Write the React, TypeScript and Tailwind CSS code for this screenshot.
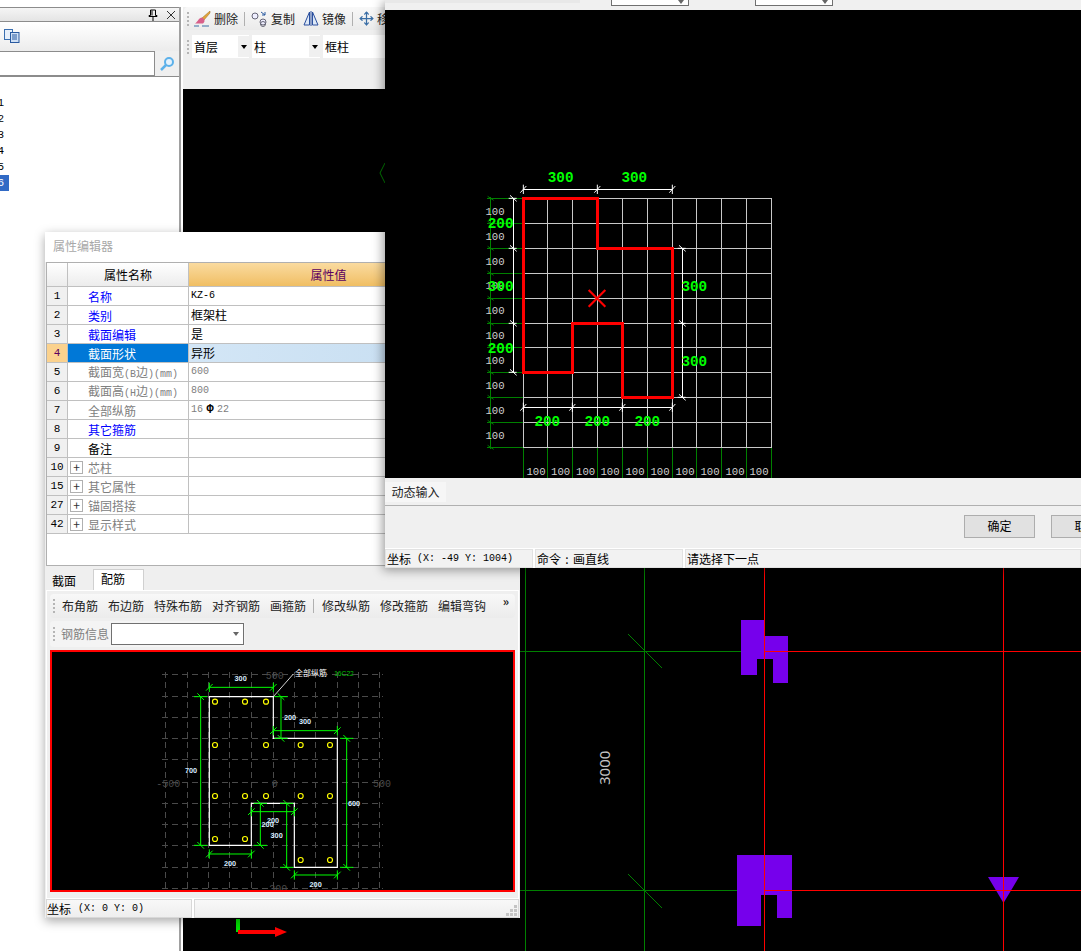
import React from "react";
import { Move } from "lucide-react";

const CJK = "font-['Noto_Sans_CJK_SC','Noto_Sans',sans-serif]";
const MONO = "font-['Liberation_Mono','Noto_Sans_CJK_SC',monospace]";

type Row = { n: string; name: string; val?: React.ReactNode; c: string; plus?: boolean; sel?: boolean; vc?: string };
const gray = `text-[#808080] text-[10px] ${MONO}`;
const rows: Row[] = [
  { n: "1", name: "名称", val: <span className={`${MONO} text-[10px]`}>KZ-6</span>, c: "text-[#0000ff]" },
  { n: "2", name: "类别", val: "框架柱", c: "text-[#0000ff]" },
  { n: "3", name: "截面编辑", val: "是", c: "text-[#0000ff]" },
  { n: "4", name: "截面形状", val: "异形", c: "text-white", sel: true },
  { n: "5", name: "截面宽(B边)(mm)", val: "600", c: "text-[#808080]", vc: gray },
  { n: "6", name: "截面高(H边)(mm)", val: "800", c: "text-[#808080]", vc: gray },
  {
    n: "7",
    name: "全部纵筋",
    val: (
      <span className="flex items-center">
        16<span className="w-[14px] text-center text-black font-bold text-[12px] leading-none">Φ</span>22
      </span>
    ),
    c: "text-[#808080]",
    vc: gray,
  },
  { n: "8", name: "其它箍筋", c: "text-[#0000ff]" },
  { n: "9", name: "备注", c: "text-black" },
  { n: "10", name: "芯柱", c: "text-[#808080]", plus: true },
  { n: "15", name: "其它属性", c: "text-[#808080]", plus: true },
  { n: "27", name: "锚固搭接", c: "text-[#808080]", plus: true },
  { n: "42", name: "显示样式", c: "text-[#808080]", plus: true },
];

function Mixed({ text }: { text: string }) {
  const parts = text.split(/([\x00-\x7f]+)/).filter(Boolean);
  return (
    <span className="whitespace-nowrap">
      {parts.map((p, i) =>
        /^[\x00-\x7f]+$/.test(p) ? (
          <span key={i} className={`${MONO} text-[10px]`}>{p}</span>
        ) : (
          <span key={i}>{p}</span>
        )
      )}
    </span>
  );
}

function Grip() {
  return (
    <div className="flex flex-col gap-[2px] w-[2px] mx-[3px] shrink-0">
      {[0, 1, 2, 3].map((i) => (
        <div key={i} className="w-[2px] h-[2px] bg-[#b5b5b5]" />
      ))}
    </div>
  );
}

function Caret({ c = "border-t-black" }: { c?: string }) {
  return <div className={`w-0 h-0 border-l-[3px] border-r-[3px] border-t-[4px] border-l-transparent border-r-transparent ${c}`} />;
}

function LeftPanel() {
  return (
    <div className="absolute left-0 top-[7px] w-[181px] bottom-0 flex flex-col bg-white border-r-2 border-[#a0a0a0]">
      <div className="h-[15px] bg-gradient-to-b from-[#f5f5f5] to-[#e4e4e4] border-y border-[#8c8c8c] flex items-center justify-end gap-[8px] pr-[3px] shrink-0">
        <svg width="10" height="12" viewBox="0 0 10 12" className="text-black">
          <path d="M2.5 1h5v5.5h1.5v1H1v-1h1.5zM4 1.5v5M5 7.5V12" fill="none" stroke="currentColor" />
        </svg>
        <svg width="10" height="10" viewBox="0 0 10 10">
          <path d="M1 1l8 8M9 1l-8 8" stroke="#333" strokeWidth="1" fill="none" />
        </svg>
      </div>
      <div className="h-[28px] mt-[1px] bg-gradient-to-b from-white to-[#ececec] flex items-center pl-[4px] pb-[2px] shrink-0">
        <svg width="16" height="14" viewBox="0 0 16 14">
          <rect x="0.5" y="0.5" width="8" height="10" fill="#e8f0fa" stroke="#3b6fb0" />
          <rect x="6.5" y="3.5" width="8.5" height="10" fill="#cfe0f5" stroke="#2a5aa0" />
          <path d="M8 6h5M8 8h5M8 10h5" stroke="#2a5aa0" />
        </svg>
      </div>
      <div className="h-[25px] flex shrink-0 bg-[#efefef]">
        <div className="flex-1 bg-white border-t border-b border-r border-[#8c8c8c]" />
        <div className="w-[24px] flex items-center justify-center">
          <svg width="15" height="15" viewBox="0 0 15 15">
            <circle cx="9" cy="6" r="4" fill="#e4f2fd" stroke="#5cb1ea" strokeWidth="2" />
            <path d="M6 9l-5 5" stroke="#5cb1ea" strokeWidth="2.5" />
          </svg>
        </div>
      </div>
      <div className="flex-1 border-t border-[#8c8c8c] pt-[18px]">
        {["1", "2", "3", "4", "5", "6"].map((n, i) => (
          <div key={n} className={`h-[16px] w-[9px] flex items-center justify-end overflow-hidden ${MONO} text-[11px] leading-none ${i === 5 ? "bg-[#316ac5] text-white" : "text-black"}`}>
            <span className="pr-[5px]">{n}</span>
          </div>
        ))}
      </div>
    </div>
  );
}

function ToolbarItem({ icon, label, extra = "" }: { icon: React.ReactNode; label: string; extra?: string }) {
  return (
    <div className={`flex items-center gap-[3px] shrink-0 whitespace-nowrap ${extra}`}>
      {icon}
      <span className="text-[12px] text-[#222]">{label}</span>
    </div>
  );
}

function Combo({ w, label, arrow }: { w: string; label: string; arrow?: boolean }) {
  return (
    <div className={`${w} h-[23px] bg-white flex items-center pl-[2px] shrink-0`}>
      <span className="flex-1 text-[12px] text-black">{label}</span>
      {arrow && (
        <div className="w-[11px] h-[21px] bg-[#f0f0f0] flex items-center justify-center">
          <Caret />
        </div>
      )}
    </div>
  );
}

function MainWindow() {
  return (
    <div className="absolute left-[183px] top-[7px] right-0 bottom-0 flex flex-col">
      <div className="h-[82px] bg-[#efefef] overflow-hidden shrink-0 flex flex-col pl-px">
        <div className="h-[23px] w-[210px] rounded-sm bg-gradient-to-b from-[#f8f8f8] to-[#ebebeb] flex items-center gap-[6px]">
          <div className="-mr-[5px] shrink-0"><Grip /></div>
          <ToolbarItem
            icon={
              <svg width="18" height="16" viewBox="0 0 18 16">
                <path d="M17 0L9 7l2 2 6-7z" fill="#e2a53b" stroke="#9a6b1c" strokeWidth="0.5" />
                <path d="M9 6.500c-3 0-4 4-7 6l8 0c1.500-1 2-3 1-4.500z" fill="#d85f8a" />
                <path d="M1 15h5M9 15h7" stroke="#3a6ea5" />
              </svg>
            }
            label="删除"
          />
          <div className="w-px h-[14px] bg-[#b0b0b0] shrink-0" />
          <ToolbarItem
            icon={
              <svg width="17" height="16" viewBox="0 0 17 16">
                <circle cx="4" cy="5" r="3" fill="#eef" stroke="#667" />
                <circle cx="12" cy="11" r="3" fill="#eef" stroke="#667" />
                <circle cx="12" cy="13" r="2.500" fill="none" stroke="#667" />
                <path d="M10 1l4 3M14 1v3h-3" stroke="#2a5aa0" fill="none" />
              </svg>
            }
            label="复制"
          />
          <ToolbarItem
            extra="ml-[2px]"
            icon={
              <svg width="16" height="15" viewBox="0 0 16 15">
                <path d="M6.500 1L1 14h5.500zM9.500 1L15 14H9.500z" fill="#dde8f6" stroke="#2a4f9e" />
                <path d="M8 0v15" stroke="#2a4f9e" />
              </svg>
            }
            label="镜像"
          />
          <div className="w-px h-[14px] bg-[#b0b0b0] shrink-0" />
          <ToolbarItem icon={<Move size={15} strokeWidth={2} color="#3a6ea5" />} label="移动" />
        </div>
        <div className="h-[25px] mt-[4px] flex items-center">
          <Grip />
          <div className="flex gap-[3px] w-[193px] overflow-hidden">
            <Combo w="w-[57px]" label="首层" arrow />
            <Combo w="w-[68px]" label="柱" arrow />
            <Combo w="w-[68px]" label="框柱" />
          </div>
        </div>
      </div>
      <div className="flex-1 bg-black overflow-hidden">
        <svg width="898" height="862" viewBox="183 89 898 862" className="block" shapeRendering="crispEdges">
          <path d="M385 163l-5 10 5 10" stroke="#008000" fill="none" shapeRendering="auto" />
          <rect x="236" y="919" width="4" height="13" fill="#00e000" />
          <rect x="238" y="930" width="40" height="4" fill="#ff0000" />
          <path d="M275 927l12 5-12 5z" fill="#ff0000" shapeRendering="auto" />
          <path d="M525.500 568V951M644.500 568V951" stroke="#008000" />
          <path d="M520 651.500H764M520 890.500H764" stroke="#008000" />
          <path d="M628 634l34 34M628 874l34 34" stroke="#008000" shapeRendering="auto" />
          <path d="M741 620H764.400V636H788V683H773V659H757V675H741Z" fill="#7600ec" />
          <path d="M737 855H792V918H777V895H761V926H737Z" fill="#7600ec" />
          <path d="M988 877H1019L1003.500 903Z" fill="#7600ec" shapeRendering="auto" />
          <path d="M764.500 568V951M1003.500 568V951" stroke="#ff0000" />
          <path d="M764 651.500H1081M764 890.500H1081" stroke="#ff0000" />
          <text x="0" y="0" transform="translate(610 785) rotate(-90)" fill="#c4c4c4" fontSize="15" fontFamily="'Noto Sans', sans-serif" shapeRendering="auto">
            3000
          </text>
        </svg>
      </div>
    </div>
  );
}

const smallCircles = [
  [195, 125], [285, 125], [348, 125], [195, 255], [348, 255], [452, 255], [540, 255], [195, 408],
  [285, 408], [348, 408], [452, 408], [540, 408], [195, 537], [285, 537], [452, 600], [540, 600],
];
const smallLabels: [string, number, number][] = [
  ["300", 272, 56], ["200", 420, 172], ["300", 465, 185], ["700", 123, 332], ["600", 612, 430],
  ["200", 369, 482], ["200", 353, 494], ["300", 380, 526], ["200", 240, 611], ["200", 497, 675],
];
const gx = [48, 112, 175, 240, 305, 370, 435, 497, 562, 625, 690];
const gy = [45, 110, 172, 235, 300, 368, 430, 493, 556, 622, 685];

function SmallCanvas() {
  const hd: [number, number, number][] = [[82, 178, 370], [212, 370, 562], [582, 178, 304], [645, 433, 562], [455, 304, 433]];
  const vd: [number, number, number][] = [[393, 110, 235], [590, 235, 622], [152, 110, 556], [331, 430, 556], [410, 430, 622]];
  return (
    <svg width="462" height="238" viewBox="52 652 462 238" className="block">
      <g transform="translate(150 660) scale(0.33333)">
        <g stroke="#4a4a4a" strokeWidth="3" strokeDasharray="20 10" fill="none" shapeRendering="crispEdges">
          {gx.map((x) => <path key={x} d={`M${x} 35V700`} />)}
          {gy.map((y) => <path key={y} d={`M35 ${y}H700`} />)}
        </g>
        <g fill="#4a4a4a" fontSize="30" fontFamily="'Liberation Mono', monospace" textAnchor="middle">
          <text x="374" y="58">500</text>
          <text x="55" y="380">-500</text>
          <text x="696" y="380">500</text>
          <text x="374" y="380">0</text>
          <text x="385" y="695">300</text>
        </g>
        <path d="M178 110H370V235H562V622H433V430H304V556H178Z" fill="none" stroke="#fff" strokeWidth="3.500" />
        <path d="M370 110L430 42" stroke="#fff" strokeWidth="2.500" fill="none" />
        <g stroke="#00ff00" strokeWidth="3" fill="none">
          {hd.map(([y, a, b]) => (
            <g key={`${y}${a}`}>
              <path d={`M${a} ${y}H${b}M${a} ${y - 14}V${y + 14}M${b} ${y - 14}V${y + 14}`} />
              <path d={`M${a - 10} ${y + 10}l20 -20M${b - 10} ${y + 10}l20 -20`} />
            </g>
          ))}
          {vd.map(([x, a, b]) => (
            <g key={`${x}${a}`}>
              <path d={`M${x} ${a}V${b}M${x - 20} ${a}H${x + 20}M${x - 20} ${b}H${x + 20}`} />
              <path d={`M${x - 10} ${a - 10}l20 20M${x - 10} ${b - 10}l20 20`} />
            </g>
          ))}
        </g>
        <g fill="none" stroke="#ffff00" strokeWidth="3.500">
          {smallCircles.map(([x, y]) => <circle key={`${x}-${y}`} cx={x} cy={y} r="7.500" />)}
        </g>
        <g fill="#d8ecff" fontSize="22" fontFamily="'Liberation Sans', sans-serif" textAnchor="middle" fontWeight="700">
          {smallLabels.map(([t, x, y]) => <text key={`${x}-${y}`} x={x} y={y + 7}>{t}</text>)}
        </g>
        <text x="483" y="47" fill="#fff" fontSize="24" textAnchor="middle" fontFamily="'Noto Sans CJK SC', sans-serif">全部纵筋</text>
        <text x="582" y="47" fill="#00c000" fontSize="20" textAnchor="middle" fontFamily="'Liberation Sans', sans-serif">16C22</text>
      </g>
    </svg>
  );
}

function PropertyWindow() {
  const tools1 = ["布角筋", "布边筋", "特殊布筋", "对齐钢筋", "画箍筋"];
  const tools2 = ["修改纵筋", "修改箍筋", "编辑弯钩"];
  return (
    <div className="absolute left-[45px] top-[232px] w-[475px] h-[686px] bg-[#efefef] flex flex-col shadow-[0_3px_10px_rgba(0,0,0,0.35)]">
      <div className="h-[30px] bg-white flex items-center pl-[8px] pb-[2px] shrink-0">
        <span className="text-[12px] text-[#a8a8a8]">属性编辑器</span>
      </div>
      <div className="h-[304px] bg-white border border-[#b0b0b0] mx-px shrink-0 flex flex-col">
        <div className="h-[24px] flex shrink-0 border-b border-[#c0c0c0]">
          <div className="w-[21px] bg-gradient-to-b from-white to-[#ececec] border-r border-[#c0c0c0]" />
          <div className="w-[121px] bg-gradient-to-b from-white to-[#ececec] border-r border-[#c0c0c0] flex items-center justify-center text-[12px] text-black">属性名称</div>
          <div className="flex-1 bg-gradient-to-b from-[#fadb9f] to-[#f0be62] flex items-center justify-center pr-[50px] text-[12px] text-[#5b0060]">属性值</div>
        </div>
        {rows.map((r) => (
          <div key={r.n} className="h-[19px] flex shrink-0 border-b border-[#c0c0c0] text-[12px] leading-[16px]">
            <div className={`w-[21px] border-r border-[#c0c0c0] flex items-center justify-center ${MONO} text-[11px] ${r.sel ? "bg-[#fbd28e] text-[#5b0060]" : "bg-[#f0f0f0] text-black"}`}>{r.n}</div>
            <div className={`w-[121px] border-r border-[#c0c0c0] flex items-center pl-[2px] pt-[2px] whitespace-nowrap ${r.c} ${r.sel ? "bg-[#0078d7]" : "bg-white"}`}>
              {r.plus ? (
                <span className="w-[13px] h-[13px] border border-[#b0b0b0] flex items-center justify-center text-[#333] text-[12px] leading-none mr-[5px] shrink-0 -mt-[2px]">+</span>
              ) : (
                <span className="w-[18px] shrink-0" />
              )}
              <Mixed text={r.name} />
            </div>
            <div className={`flex-1 pl-[2px] flex items-center ${r.sel ? "bg-gradient-to-r from-[#d3e6f6] to-[#c4dcf0]" : "bg-white"} ${r.vc ?? "text-black"}`}>{r.val}</div>
          </div>
        ))}
      </div>
      <div className="h-[3px] shrink-0" />
      <div className="h-[21px] flex items-end pl-px shrink-0">
        <div className="w-[47px] h-[20px] flex items-center pl-[6px] pt-px text-[12px] text-black">截面</div>
        <div className="w-[51px] h-[21px] bg-white border border-b-0 border-[#d0d0d0] flex items-center pl-[7px] pb-[2px] text-[12px] text-black">配筋</div>
      </div>
      <div className="flex-1 mx-px bg-[#efefef] border-t border-x border-white px-[3px] pt-[3px] flex flex-col min-h-0">
        <div className="h-[24px] rounded-sm bg-gradient-to-b from-[#f8f8f8] to-[#ececec] flex items-center text-[12px] text-[#222] shrink-0 relative">
          <Grip />
          <div className="flex items-center gap-[10px] pl-[4px]">
            {tools1.map((t) => <span key={t}>{t}</span>)}
            <div className="w-px h-[14px] bg-[#b0b0b0] -ml-[3px] -mr-[2px]" />
            {tools2.map((t) => <span key={t}>{t}</span>)}
          </div>
          <span className="absolute right-[6px] top-[0px] text-[12px] font-bold leading-[14px]">»</span>
        </div>
        <div className="h-[26px] mt-[3px] w-[195px] bg-[#f4f4f4] rounded-sm flex items-center shrink-0">
          <Grip />
          <span className="ml-[3px] text-[12px] text-[#808080] whitespace-nowrap">钢筋信息</span>
          <div className="ml-[2px] w-[133px] h-[22px] bg-white border border-[#707070] flex items-center justify-end pr-[4px] shrink-0">
            <Caret c="border-t-[#666]" />
          </div>
        </div>
        <div className="h-[242px] mt-[3px] bg-black border-2 border-[#ff0000] shrink-0">
          <SmallCanvas />
        </div>
      </div>
      <div className="h-[20px] flex gap-[2px] bg-white pt-px shrink-0 mx-px">
        <div className="w-[146px] border border-[#d8d8d8] bg-gradient-to-b from-[#f8f8f8] to-[#eeeeee] flex items-center text-[12px] text-black">
          坐标<span className={`${MONO} text-[10px] pl-[7px]`}>(X: 0 Y: 0)</span>
        </div>
        <div className="flex-1 border border-[#d8d8d8] bg-gradient-to-b from-[#f8f8f8] to-[#eeeeee] flex items-end justify-end p-px">
          <svg width="11" height="11" viewBox="0 0 11 11">
            <path d="M8 0h3v3H8zM4 4h3v3H4zM8 4h3v3H8zM0 8h3v3H0zM4 8h3v3H4zM8 8h3v3H8z" fill="#c4c4c4" />
          </svg>
        </div>
      </div>
    </div>
  );
}

const gV = [160, 232, 307, 382, 457, 532, 607, 679, 755, 830, 905];
const gH = [115, 190, 265, 340, 415, 490, 562, 637, 712, 787, 862];
const leftNums = [155, 230, 305, 377, 452, 527, 602, 677, 752, 825];
const botNums = [198, 272, 347, 420, 495, 570, 645, 720, 795, 867];
const greens: [string, number, number][] = [
  ["300", 272, 50], ["300", 493, 50], ["200", 92, 190], ["300", 92, 377], ["200", 92, 563],
  ["300", 673, 377], ["300", 673, 602], ["200", 232, 782], ["200", 382, 782], ["200", 532, 782],
];

function DialogCanvas() {
  const hTicks = [[88, [160, 382, 607]], [742, [160, 307, 457, 607]]] as [number, number[]][];
  const vTicks = [[130, [115, 265, 490, 637]], [637, [265, 490, 712]]] as [number, number[]][];
  return (
    <svg width="696" height="468" viewBox="385 10 696 468" className="block">
      <g transform="translate(470 160) scale(0.33333)">
        <g stroke="#008000" strokeWidth="3" fill="none" shapeRendering="crispEdges">
          {gH.map((y) => <path key={y} d={`M50 ${y}H160`} />)}
          <path d="M62 110V866" />
          {gV.map((x) => <path key={x} d={`M${x} 862V955`} />)}
        </g>
        <g stroke="#c8c8c8" strokeWidth="3" fill="none" shapeRendering="crispEdges">
          {gV.map((x) => <path key={x} d={`M${x} 115V862`} />)}
          {gH.map((y) => <path key={y} d={`M160 ${y}H905`} />)}
        </g>
        <g stroke="#008000" strokeWidth="3" fill="none">
          {gH.map((y) => <path key={y} d={`M53 ${y - 6}l18 12`} />)}
        </g>
        <g stroke="#fff" strokeWidth="3" fill="none">
          {hTicks.map(([y, xs]) => (
            <g key={y}>
              <path d={`M${xs[0]} ${y}H${xs[xs.length - 1]}`} shapeRendering="crispEdges" />
              {xs.map((x) => <path key={x} d={`M${x - 9} ${y + 10}l18 -20M${x} ${y - 14}V${y + 14}`} />)}
            </g>
          ))}
          {vTicks.map(([x, ys]) => (
            <g key={x}>
              <path d={`M${x} ${ys[0]}V${ys[ys.length - 1]}`} shapeRendering="crispEdges" />
              {ys.map((y) => <path key={y} d={`M${x - 14} ${y}H${x + 10}M${x - 10} ${y - 9}l20 18`} />)}
            </g>
          ))}
        </g>
        <path d="M160 115H382V265H607V712H457V490H307V637H160Z" fill="none" stroke="#ff0000" strokeWidth="9" shapeRendering="crispEdges" />
        <path d="M356 390l50 50M406 390l-50 50" stroke="#ff0000" strokeWidth="6.500" />
        <g fill="#cfcfcf" fontSize="32" fontFamily="'Liberation Mono', monospace" textAnchor="middle">
          {leftNums.map((y) => <text key={y} x="75" y={y + 11}>100</text>)}
          {botNums.map((x) => <text key={x} x={x} y="945">100</text>)}
        </g>
        <g fill="#00ff00" fontSize="43" fontFamily="'Liberation Mono', monospace" textAnchor="middle" fontWeight="700">
          {greens.map(([t, x, y]) => <text key={`${x}-${y}`} x={x} y={y + 15}>{t}</text>)}
        </g>
      </g>
    </svg>
  );
}

function Dialog() {
  return (
    <div className="absolute left-[385px] top-0 w-[696px] h-[568px] bg-[#f0f0f0] flex flex-col shadow-[-2px_2px_10px_rgba(0,0,0,0.4)]">
      <div className="h-[10px] relative overflow-hidden shrink-0">
        <div className="absolute left-0 top-0 w-[195px] h-[3px] bg-[#e8e8e8]" />
        <div className="absolute left-[33px] -top-[15px] flex text-[12px] text-black leading-[18px]">
          <span className="w-[62px]">直线</span>
          <span className="w-[53px]">矩形</span>
          <span>三点弧</span>
        </div>
        <div className="absolute left-[226px] -top-[10px] w-[78px] h-[16px] border border-[#707070] bg-white flex items-end justify-end pr-[4px] pb-[1px]">
          <Caret c="border-t-[#666]" />
        </div>
        <div className="absolute left-[370px] -top-[10px] w-[78px] h-[16px] border border-[#707070] bg-white flex items-end justify-end pr-[4px] pb-[1px]">
          <Caret c="border-t-[#666]" />
        </div>
      </div>
      <div className="h-[468px] bg-black overflow-hidden shrink-0">
        <DialogCanvas />
      </div>
      <div className="h-[28px] border-b border-[#b0b0b0] flex items-start pt-[4px] shrink-0">
        <div className="w-[61px] h-[20px] bg-[#f6f6f6] flex items-center justify-center text-[12px] text-[#222]">动态输入</div>
      </div>
      <div className="flex-1 flex justify-end gap-[16px] pt-[9px] pr-0 overflow-hidden">
        <button className="w-[71px] h-[23px] pb-px bg-[#e1e1e1] border border-[#adadad] text-[12px] text-black shrink-0">确定</button>
        <button className="w-[71px] h-[23px] pb-px bg-[#e1e1e1] border border-[#adadad] text-[12px] text-black shrink-0 -mr-[41px]">取消</button>
      </div>
      <div className="h-[20px] bg-white flex gap-[2px] pt-px shrink-0 text-[12px] text-black">
        <div className="w-[148px] bg-[#f2f2f2] border border-[#e2e2e2] flex items-center pl-px">
          坐标<span className={`${MONO} text-[10px] pl-[6px] whitespace-nowrap`}>(X: -49 Y: 1004)</span>
        </div>
        <div className="w-[148px] bg-[#f2f2f2] border border-[#e2e2e2] flex items-center pl-px">
          命令<span className="w-[12px] text-center">:</span>画直线
        </div>
        <div className="flex-1 bg-[#f2f2f2] border border-[#e2e2e2] flex items-center pl-px">请选择下一点</div>
      </div>
    </div>
  );
}

export default function App() {
  return (
    <div className={`relative w-[1081px] h-[951px] overflow-hidden bg-white ${CJK}`}>
      <LeftPanel />
      <MainWindow />
      <PropertyWindow />
      <Dialog />
    </div>
  );
}
